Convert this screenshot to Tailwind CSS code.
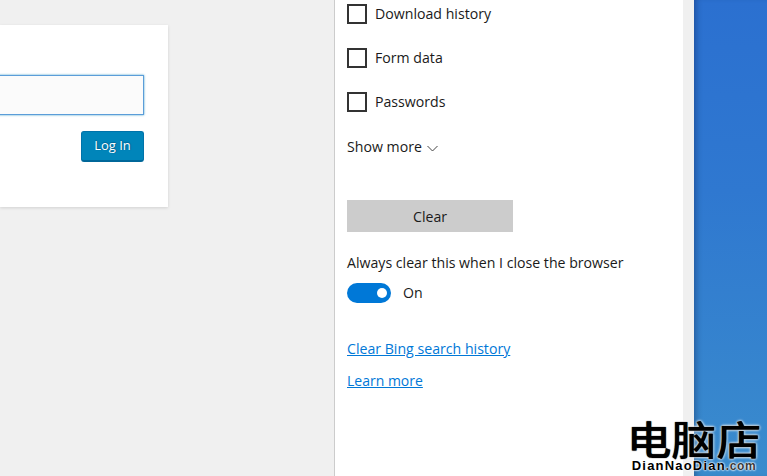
<!DOCTYPE html>
<html lang="en">
<head>
<meta charset="utf-8">
<script src="https://cdn.jsdelivr.net/npm/@tailwindcss/browser@4"></script>
</head>
<body class="m-0 overflow-hidden">
<div class="relative flex h-[476px] w-[767px] overflow-hidden font-['Open_Sans','Noto_Sans',sans-serif]">
  <!-- page behind -->
  <main class="h-full w-[334px] shrink-0 bg-[#f0f0f0] pt-[25px]">
    <div class="flex h-[182px] w-[168px] flex-col items-end bg-white pt-[50px] pr-6 shadow-[0_1px_3px_rgba(0,0,0,0.13)]">
      <div class="h-10 w-[152px] shrink-0 border border-[#5b9dd9] bg-[#fbfbfb] shadow-[0_0_2px_rgba(30,140,190,0.8)]"></div>
      <button class="mt-4 flex h-[31px] w-[63px] items-center justify-center rounded-[3px] border border-[#0073aa] border-b-2 border-b-[#006799] bg-[#0085ba] text-[13px] text-white [text-shadow:0_-1px_1px_#006799,1px_0_1px_#006799]">Log In</button>
    </div>
  </main>
  <!-- settings flyout -->
  <aside class="h-full w-[349px] shrink-0 border-l border-[#cccccc] bg-white pt-1 pl-3 text-[14.15px] text-[#1a1a1a]">
    <div class="flex flex-col gap-6">
      <label class="flex h-5 items-center gap-2"><span class="size-5 border-2 border-[#333333]"></span><span>Download history</span></label>
      <label class="flex h-5 items-center gap-2"><span class="size-5 border-2 border-[#333333]"></span><span>Form data</span></label>
      <label class="flex h-5 items-center gap-2"><span class="size-5 border-2 border-[#333333]"></span><span>Passwords</span></label>
    </div>
    <div class="mt-[25px] flex h-5 items-center gap-[5px]">
      <span>Show more</span>
      <svg class="mt-0.5" width="11" height="7" viewBox="0 0 11 7" fill="none" stroke="#444444" stroke-width="1"><path d="M0.5 1 L5.5 6 L10.5 1"/></svg>
    </div>
    <button class="mt-[43px] block h-8 w-[166px] bg-[#cccccc] pt-px text-[#1a1a1a]">Clear</button>
    <p class="mt-[21px] h-5 leading-5">Always clear this when I close the browser</p>
    <div class="mt-[10px] flex h-5 items-center gap-3">
      <span class="flex h-5 w-11 items-center justify-end rounded-full bg-[#0078d7] pr-[4.5px]"><span class="size-[10px] rounded-full bg-white"></span></span>
      <span>On</span>
    </div>
    <a href="#" class="mt-[36px] block h-5 leading-5 text-[#0078d7] underline">Clear Bing search history</a>
    <a href="#" class="mt-3 block h-5 w-fit text-[14px] leading-5 text-[#0078d7] underline">Learn more</a>
  </aside>
  <div class="h-full w-[11px] shrink-0 bg-[#f0f0f0]"></div>
  <div class="h-full flex-1 bg-[linear-gradient(180deg,#2b70d0_0%,#2f78d0_40%,#3a8ccd_100%)] shadow-[inset_6px_0_6px_-4px_rgba(0,0,40,0.3)]"></div>
  <!-- watermark -->
  <div class="absolute top-[418px] left-[627px] flex w-[134px] flex-col items-center">
    <span class="scale-x-[1.12] font-['Noto_Sans_CJK_SC',sans-serif] text-[40px] leading-[41px] font-medium text-black [text-shadow:0_0_1px_black,0_0_2px_white,0_0_2px_white,0_0_3px_white]">电脑店</span>
    <span class="font-['Liberation_Sans',sans-serif] text-[13px] leading-[14px] font-bold tracking-[1.2px] whitespace-nowrap text-black [text-shadow:0_0_2px_white,0_0_2px_white,0_0_2px_white]">DianNaoDian<span class="text-[12px] tracking-[0.6px] text-[#3a3a3a]">.com</span></span>
  </div>
</div>
</body>
</html>
